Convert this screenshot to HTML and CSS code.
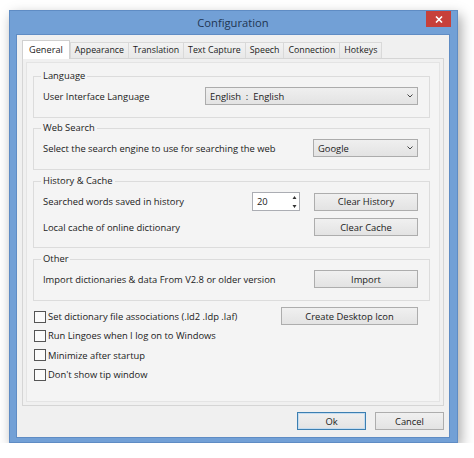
FILE: index.html
```html
<!DOCTYPE html>
<html>
<head>
<meta charset="utf-8">
<link rel="stylesheet" href="styles.css">
</head>
<body>
<div class="window">
  <div class="titlebar">
    <span></span>
    <span class="title">Configuration</span>
    <span class="close"><svg width="8" height="7" viewBox="0 0 8 7"><path d="M1 0.5 L7 6.5 M7 0.5 L1 6.5" stroke="#fff" stroke-width="1.6"/></svg></span>
  </div>
  <div class="client">
    <div class="tabs">
      <span class="tab active">General</span>
      <span class="tab">Appearance</span>
      <span class="tab">Translation</span>
      <span class="tab">Text Capture</span>
      <span class="tab">Speech</span>
      <span class="tab">Connection</span>
      <span class="tab">Hotkeys</span>
    </div>
    <div class="panel">
      <div class="page">
        <fieldset class="group first">
          <legend>Language</legend>
          <div class="row lang">
            <span>User Interface Language</span>
            <span class="select">English&nbsp; : &nbsp;English<svg class="chev" width="6" height="4" viewBox="0 0 6 4"><path d="M0.5 0.5 L3 3 L5.5 0.5" fill="none" stroke="#444" stroke-width="1"/></svg></span>
          </div>
        </fieldset>
        <fieldset class="group">
          <legend>Web Search</legend>
          <div class="row web">
            <span>Select the search engine to use for searching the web</span>
            <span class="select">Google<svg class="chev" width="6" height="4" viewBox="0 0 6 4"><path d="M0.5 0.5 L3 3 L5.5 0.5" fill="none" stroke="#444" stroke-width="1"/></svg></span>
          </div>
        </fieldset>
        <fieldset class="group hist-group">
          <legend>History &amp; Cache</legend>
          <div class="row hist">
            <span>Searched words saved in history</span>
            <span class="spin">20<span class="arrows"><svg width="5" height="14" viewBox="0 0 5 14"><path d="M2.5 1 L4.5 4 L0.5 4 Z M0.5 10 L4.5 10 L2.5 13 Z" fill="#333"/></svg></span></span>
            <span class="btn">Clear History</span>
            <span class="span2">Local cache of online dictionary</span>
            <span class="btn">Clear Cache</span>
          </div>
        </fieldset>
        <fieldset class="group">
          <legend>Other</legend>
          <div class="row other">
            <span>Import dictionaries &amp; data From V2.8 or older version</span>
            <span class="btn">Import</span>
          </div>
        </fieldset>
        <div class="checks">
          <div class="checklist">
            <label class="check"><span class="box"></span>Set dictionary file associations (.ld2 .ldp .laf)</label>
            <label class="check"><span class="box"></span>Run Lingoes when I log on to Windows</label>
            <label class="check"><span class="box"></span>Minimize after startup</label>
            <label class="check"><span class="box"></span>Don't show tip window</label>
          </div>
          <span class="btn desk">Create Desktop Icon</span>
        </div>
      </div>
    </div>
    <div class="footer">
      <span class="btn ok">Ok</span>
      <span class="btn">Cancel</span>
    </div>
  </div>
</div>
</body>
</html>
```

FILE: styles.css
```css
html, body {
  margin: 0;
  padding: 0;
  background: #ffffff;
}
body {
  font-family: "Open Sans", "Noto Sans", sans-serif;
  font-size: 9.4px;
  color: #1b1b1b;
}
.window {
  margin: 10px 0 0 9px;
  width: 449px;
  height: 433px;
  box-sizing: border-box;
  background: #72a0d6;
  border: 1px solid #5f8cc4;
  padding: 0 7px 6px 6px;
  display: flex;
  flex-direction: column;
  box-shadow: 3px 5px 12px rgba(0, 0, 0, 0.35);
}
.titlebar {
  height: 23px;
  display: grid;
  grid-template-columns: 1fr auto 1fr;
  align-items: start;
}
.title {
  font-size: 11.2px;
  color: #1f3553;
  line-height: 24px;
}
.close {
  justify-self: end;
  width: 25px;
  height: 16px;
  margin-right: -1px;
  background: #c7403a;
  display: flex;
  align-items: center;
  justify-content: center;
}
.client {
  flex: 1;
  background: #f0f0f0;
  border: 1px solid #5f8cc4;
  padding: 5px 5px 7px 5px;
  display: flex;
  flex-direction: column;
}
.tabs {
  display: flex;
  height: 18px;
  align-items: flex-end;
  position: relative;
  z-index: 1;
  font-size: 8.8px;
}
.tab {
  height: 16px;
  line-height: 15px;
  box-sizing: border-box;
  border: 1px solid #d9d9d9;
  border-bottom: none;
  background: linear-gradient(#f2f2f2, #e8e8e8);
  padding: 0 4px;
  margin-left: -1px;
}
.tab.active {
  height: 19px;
  margin-bottom: -1px;
  background: #ffffff;
  border-color: #d0d0d0;
  margin-left: 0;
  margin-right: 1px;
  padding: 0 6px;
  line-height: 17px;
  font-size: 9.2px;
}
.panel {
  height: 348px;
  box-sizing: border-box;
  border: 1px solid #d5d5d5;
  background: #f0f0f0;
  padding: 3px;
}
.page {
  height: 100%;
  box-sizing: border-box;
  border: 1px solid #e4e4e4;
  background: #f4f4f4;
  padding: 6px 9px 0 6px;
}
.group {
  margin: 0 0 4px 0;
  padding: 4px 11px 12px 9px;
  border: 1px solid #dcdcdc;
  min-width: 0;
}
.group.first { margin-bottom: 3px; }
.group.hist-group { padding-bottom: 11px; }
.group legend {
  padding: 0 2px;
  margin-left: -2px;
  line-height: 14px;
}
.row {
  display: grid;
  align-items: center;
}
.row.lang { grid-template-columns: 1fr 213px; }
.row.web { grid-template-columns: 1fr 105px; }
.row.hist {
  grid-template-columns: 1fr 48px 104px;
  column-gap: 14px;
  row-gap: 7px;
}
.row.hist .span2 { grid-column: 1 / 3; }
.row.other { grid-template-columns: 1fr 104px; }
.select {
  height: 18px;
  box-sizing: border-box;
  border: 1px solid #acacac;
  background: linear-gradient(#efefef, #e3e3e3);
  display: flex;
  align-items: center;
  padding: 0 4px 0 4px;
}
.chev { margin-left: auto; }
.spin {
  height: 19px;
  box-sizing: border-box;
  border: 1px solid #abadb3;
  background: #fff;
  display: flex;
  align-items: center;
  padding: 0 2px 0 4px;
}
.arrows { margin-left: auto; display: flex; }
.btn {
  height: 18px;
  box-sizing: border-box;
  border: 1px solid #adadad;
  background: linear-gradient(#f0f0f0, #e3e3e3);
  display: flex;
  align-items: center;
  justify-content: center;
}
.checks {
  margin-top: 6px;
  display: flex;
  align-items: flex-start;
  padding-left: 1px;
  padding-right: 12px;
}
.checklist {
  flex: 1;
  display: flex;
  flex-direction: column;
}
.check {
  height: 19.3px;
  display: flex;
  align-items: center;
  gap: 2px;
}
.box {
  width: 10px;
  height: 10px;
  border: 1px solid #555;
  background: #fbfbfb;
}
.desk { width: 137px; }
.footer {
  margin-top: 6px;
  display: flex;
  justify-content: flex-end;
  gap: 9px;
}
.footer .btn { width: 69px; }
.btn.ok {
  border-color: #3c7fb1;
  box-shadow: inset 0 0 0 1px #c4dcf0;
}
```
